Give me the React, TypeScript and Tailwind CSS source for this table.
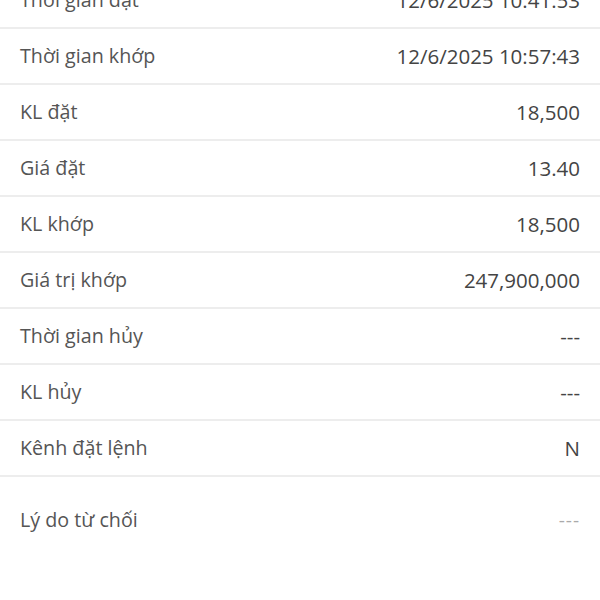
const rows: { label: string; value: string }[] = [
  { label: "Thời gian đặt", value: "12/6/2025 10:41:53" },
  { label: "Thời gian khớp", value: "12/6/2025 10:57:43" },
  { label: "KL đặt", value: "18,500" },
  { label: "Giá đặt", value: "13.40" },
  { label: "KL khớp", value: "18,500" },
  { label: "Giá trị khớp", value: "247,900,000" },
  { label: "Thời gian hủy", value: "---" },
  { label: "KL hủy", value: "---" },
  { label: "Kênh đặt lệnh", value: "N" },
];

export default function App() {
  return (
    <div className="h-[600px] w-[600px] overflow-hidden bg-white">
      <div className="-mt-[27px]">
        {rows.map((r) => (
          <div
            key={r.label}
            className="flex h-[56px] items-center justify-between border-b-2 border-[#ededed] px-5"
          >
            <span className="font-['Open_Sans',sans-serif] text-[19.7px] text-[#555]">{r.label}</span>
            <span className="font-['Open_Sans',sans-serif] text-[20.5px] text-[#444]">{r.value}</span>
          </div>
        ))}
        <div className="flex items-center justify-between px-5 pt-[28px] pb-6">
          <span className="font-['Open_Sans',sans-serif] text-[19.7px] text-[#555]">Lý do từ chối</span>
          <span className="font-['Open_Sans',sans-serif] text-[19px] tracking-[1px] text-[#aaa]">---</span>
        </div>
      </div>
    </div>
  );
}
